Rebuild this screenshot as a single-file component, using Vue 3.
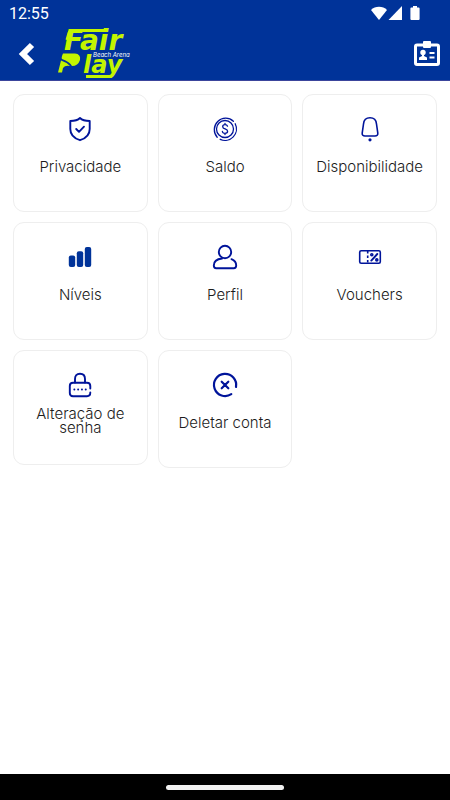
<script setup>
const items = [
  { id: 'privacy', label: 'Privacidade' },
  { id: 'balance', label: 'Saldo' },
  { id: 'availability', label: 'Disponibilidade' },
  { id: 'levels', label: 'Níveis' },
  { id: 'profile', label: 'Perfil' },
  { id: 'vouchers', label: 'Vouchers' },
  { id: 'password', label: 'Alteração de senha', compact: true },
  { id: 'delete', label: 'Deletar conta' }
]
</script>

<template>
  <div class="screen">
    <header class="top">
      <div class="status">
        <span class="clock">12:55</span>
        <svg class="signals" width="50" height="16" viewBox="0 0 50 16" aria-hidden="true">
          <path d="M1 4C5-.3 13-.3 17 4L9 14z" />
          <path d="M32 0v14H18.500z" />
          <path d="M43 0h4v1.500h1.600q1 0 1 1V13q0 1-1 1h-7.200q-1 0-1-1V2.500q0-1 1-1H43z" />
        </svg>
      </div>
      <div class="bar">
        <button class="plain" type="button" aria-label="Voltar">
          <svg width="18" height="24" viewBox="0 0 18 24">
            <path class="chevron" d="M14 3L5 12l9 9" />
          </svg>
        </button>
        <svg class="logo" width="76" height="52" viewBox="0 0 76 52" role="img" aria-label="Fair Play Beach Arena">
          <path class="line" d="M9 12l2-7Q12 2.500 15 2.500H49" />
          <text class="word" x="6" y="22">Fair</text>
          <path class="ball" d="M5 25.500H17Q23 26 22 32Q20 38 14 38Q12 34 4 31Q3 30 5 25.500z" />
          <path class="ball" d="M3 32.500Q8 34 12 38Q7 37 5 40L4 44.500H0z" />
          <text class="word lower" x="25" y="45">lay</text>
          <path class="line" d="M28 48.500H54" />
          <text class="tag" x="35" y="29">Beach Arena</text>
        </svg>
        <button class="plain badge" type="button" aria-label="Carteirinha">
          <svg width="26" height="26" viewBox="0 0 26 26">
            <rect class="frame" x="1.500" y="4" width="23" height="19.500" rx="1.500" />
            <rect x="9" y="0" width="8" height="7" rx="1" />
            <circle cx="9" cy="11.500" r="2.700" />
            <path d="M8 13h2v2l3 1.500V19H5v-2.500L8 15zM15.500 11h5v2h-5zM15.500 15.500h5v2h-5z" />
          </svg>
        </button>
      </div>
    </header>

    <main class="grid">
      <button v-for="item in items" :key="item.id" type="button" class="card" :class="{ compact: item.compact }">
        <svg class="icon" width="24" height="24" viewBox="0 0 24 24" aria-hidden="true">
          <g v-if="item.id === 'privacy'" class="strong">
            <path d="M12 1Q15 4 21.700 4V12C21.700 18 17.500 21.500 12 23.200C6.500 21.500 2.300 18 2.300 12V4Q9 4 12 1z" />
            <path d="M8.200 12l2.800 2.800L16 9.700" />
          </g>
          <g v-else-if="item.id === 'balance'" class="fine">
            <path d="M20.400 4.200A11.400 11.400 0 0 0 4.200 20.200M7.200 22.300A11.400 11.400 0 0 0 22.200 6.800" />
            <circle cx="12" cy="12" r="8.500" />
            <path d="M14.500 9.200Q14 7.700 12 7.700Q9.700 7.700 9.700 9.700C9.700 12.500 14.600 11.400 14.600 14.200Q14.600 16.300 12 16.300Q9.600 16.300 9.400 14.500M12 6.500v1M12 16.500v1" />
          </g>
          <g v-else-if="item.id === 'availability'">
            <path d="M12 .8C8 .8 5.800 3.500 5.500 7L4.200 16.200Q4 19 7 19H17Q20 19 19.800 16.200L18.500 7C18.200 3.500 16 .8 12 .8z" />
            <circle class="solid" cx="12" cy="22.800" r=".8" />
          </g>
          <g v-else-if="item.id === 'levels'" class="solid flat">
            <rect x=".8" y="10.500" width="6.400" height="11.500" rx="2" />
            <rect x="8.800" y="6.300" width="6.400" height="15.700" rx="2" />
            <rect x="16.800" y="2" width="6.400" height="20" rx="2" />
          </g>
          <g v-else-if="item.id === 'profile'" class="strong">
            <circle cx="12" cy="7" r="6.200" />
            <path d="M9 13.500C4 14 .8 16.500 .8 20.500Q.8 23.200 3.200 23.200H20.800Q23.200 23.200 23.200 20.500Q23.200 16 18.500 14.200" />
          </g>
          <g v-else-if="item.id === 'vouchers'">
            <rect x="1.700" y="5.700" width="20.600" height="12.600" rx="1.500" />
            <path stroke-dasharray="2.500 2" stroke-linecap="butt" d="M9.700 6v12" />
            <path class="strong" d="M13.300 15.600L19.300 9" />
            <circle cx="13.800" cy="9.700" r="1" />
            <circle cx="18.800" cy="14.900" r="1" />
          </g>
          <g v-else-if="item.id === 'password'" class="strong">
            <path d="M7 9.500V6Q7 .8 12 .8T17 6V9.500" />
            <path d="M22.300 15.500V13Q22.300 9.700 19 9.700H5Q1.800 9.700 1.800 13V20Q1.800 23.200 5 23.200H19Q22.300 23.200 22.300 19.500" />
            <path d="M6.300 16.500h.1M10.100 16.500h.1M13.900 16.500h.1M17.700 16.500h.1" />
          </g>
          <g v-else class="bold">
            <path d="M23 14A11.100 11.100 0 1 0 18.300 21.200" />
            <path d="M8.700 8.700l6.600 6.600M15.300 8.700l-6.600 6.600" />
          </g>
        </svg>
        <span class="label">{{ item.label }}</span>
      </button>
    </main>

    <footer class="nav"><span class="handle"></span></footer>
  </div>
</template>

<style>
body {
  margin: 0;
  background: #fff;
}
</style>

<style scoped>
.screen {
  min-height: 100vh;
  display: flex;
  flex-direction: column;
  font-family: Inter, "Liberation Sans", sans-serif;
}
.top {
  background: #003399;
  border-bottom: 1px solid #3b459c;
}
.status {
  height: 28px;
  padding: 0 30px 0 9px;
  display: flex;
  align-items: center;
  justify-content: space-between;
  color: #fff;
  font: 16px/28px Roboto, sans-serif;
}
.signals {
  fill: #fff;
}
.bar {
  height: 52px;
  padding: 0 10px 0 18px;
  display: flex;
  align-items: center;
}
.plain {
  border: 0;
  padding: 0;
  background: none;
  display: flex;
  fill: #fff;
  cursor: pointer;
}
.chevron {
  fill: none;
  stroke: #fff;
  stroke-width: 6;
}
.logo {
  margin-left: 22px;
  overflow: visible;
}
.word {
  font: italic bold 28px "DejaVu Sans", sans-serif;
  fill: #c3f500;
}
.lower {
  font-size: 24px;
}
.line {
  fill: none;
  stroke: #c3f500;
  stroke-width: 3;
}
.ball {
  fill: #c3f500;
}
.tag {
  font: italic 6px Inter, sans-serif;
  fill: #fff;
}
.badge {
  margin-left: auto;
}
.frame {
  fill: none;
  stroke: #fff;
  stroke-width: 3;
}
.grid {
  flex: 1;
  display: grid;
  grid-template-columns: repeat(3, minmax(0, 1fr));
  align-content: start;
  align-items: start;
  gap: 10px;
  padding: 13px;
}
.card {
  box-sizing: border-box;
  min-height: 118px;
  padding: 22px 8px 16px;
  border: 1px solid #eee;
  border-radius: 11px;
  background: #fff;
  display: flex;
  flex-direction: column;
  align-items: center;
  justify-content: flex-start;
  gap: 1px;
  font-family: inherit;
  cursor: pointer;
}
.compact {
  min-height: 115px;
}
.compact .label {
  min-height: 46px;
}
.icon {
  flex: none;
  fill: none;
  stroke: #00149a;
  stroke-width: 1.6;
  stroke-linecap: round;
  stroke-linejoin: round;
  overflow: visible;
}
.fine {
  stroke-width: 1.3;
}
.strong {
  stroke-width: 1.9;
}
.bold {
  stroke-width: 2.2;
}
.solid {
  fill: #003399;
}
.flat {
  stroke: none;
}
.label {
  min-height: 50px;
  display: flex;
  align-items: center;
  color: #1c1c1c;
  font-size: 15px;
  font-weight: 300;
  line-height: 14px;
  text-align: center;
}
.nav {
  height: 26px;
  background: #000;
  display: flex;
  align-items: center;
  justify-content: center;
}
.handle {
  width: 118px;
  height: 5px;
  border-radius: 3px;
  background: #f1f1f1;
}
</style>
